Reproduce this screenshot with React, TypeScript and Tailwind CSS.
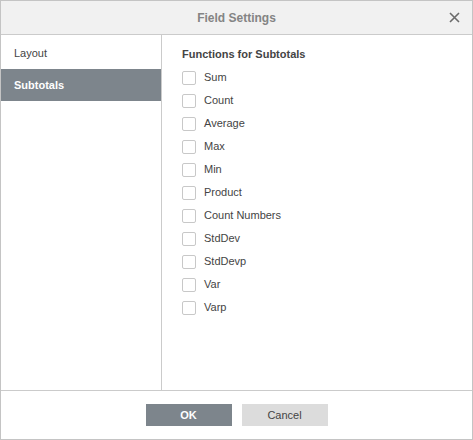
const FUNCS = [
  "Sum",
  "Count",
  "Average",
  "Max",
  "Min",
  "Product",
  "Count Numbers",
  "StdDev",
  "StdDevp",
  "Var",
  "Varp",
];

export default function App() {
  return (
    <div
      className="w-[473px] h-[440px] border border-[#c4c4c4] bg-white flex flex-col text-[11px] text-[#444]"
      style={{ fontFamily: '"Liberation Sans", Arial, sans-serif' }}
    >
      <div className="h-[34px] shrink-0 bg-[#f1f1f1] border-b border-[#cbcbcb] flex items-center justify-center relative">
        <span className="text-[12px] font-bold text-[#848484]">Field Settings</span>
        <svg
          className="absolute right-[12px] top-[11px]"
          width="11"
          height="11"
          viewBox="0 0 11 11"
        >
          <path d="M1 1L10 10M10 1L1 10" stroke="#6b6b6b" strokeWidth="1.6" />
        </svg>
      </div>
      <div className="flex flex-1 min-h-0">
        <div className="w-[161px] shrink-0 border-r border-[#cbcbcb] pt-[2px]">
          <div className="h-[32px] flex items-center pl-[13px] text-[#444]">Layout</div>
          <div className="h-[32px] flex items-center pl-[13px] bg-[#7d858c] text-white font-bold">
            Subtotals
          </div>
        </div>
        <div className="flex-1 pl-[20px] pt-[11px]">
          <div className="font-bold text-[#444] h-[16px] leading-[16px]">Functions for Subtotals</div>
          <div className="flex flex-col mt-[4px]">
            {FUNCS.map((f) => (
              <label key={f} className="h-[23px] flex items-center gap-[8px]">
                <span className="w-[14px] h-[14px] border border-[#c8c8c8] rounded-[2px] bg-white" />
                <span>{f}</span>
              </label>
            ))}
          </div>
        </div>
      </div>
      <div className="h-[49px] shrink-0 border-t border-[#cbcbcb] flex items-center justify-center gap-[10px]">
        <button className="w-[86px] h-[22px] bg-[#7d858c] text-white font-bold">OK</button>
        <button className="w-[86px] h-[22px] bg-[#dcdcdc] text-[#444]">Cancel</button>
      </div>
    </div>
  );
}
